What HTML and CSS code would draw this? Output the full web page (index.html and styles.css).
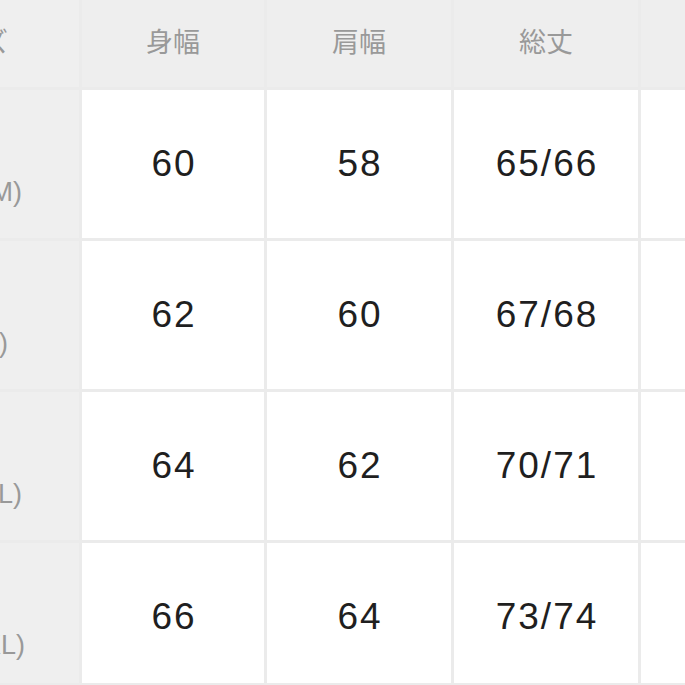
FILE: index.html
```html
<!DOCTYPE html>
<html lang="ja">
<head>
<meta charset="utf-8">
<title>サイズ表</title>
<link rel="stylesheet" href="styles.css">
</head>
<body>
<div class="size-table">
  <div class="cell head label"><span>サイズ</span></div>
  <div class="cell head">身幅</div>
  <div class="cell head">肩幅</div>
  <div class="cell head">総丈</div>
  <div class="cell head"></div>

  <div class="cell label"><span>S(M)</span></div>
  <div class="cell num">60</div>
  <div class="cell num">58</div>
  <div class="cell num">65/66</div>
  <div class="cell num"></div>

  <div class="cell label narrow"><span>(S)</span></div>
  <div class="cell num">62</div>
  <div class="cell num">60</div>
  <div class="cell num">67/68</div>
  <div class="cell num"></div>

  <div class="cell label"><span>(L)</span></div>
  <div class="cell num">64</div>
  <div class="cell num">62</div>
  <div class="cell num">70/71</div>
  <div class="cell num"></div>

  <div class="cell label last wide"><span>(XL)</span></div>
  <div class="cell num last">66</div>
  <div class="cell num last">64</div>
  <div class="cell num last">73/74</div>
  <div class="cell num last"></div>
</div>
</body>
</html>
```

FILE: styles.css
```css
html, body {
  margin: 0;
  padding: 0;
  background: #ffffff;
  overflow: hidden;
}

.size-table {
  display: grid;
  grid-template-columns: 79px 182px 184px 184px 1fr;
  grid-template-rows: 87px 148px 148px 148px 140px;
  gap: 3px;
  background: #ebebeb;
  width: 685px;
  padding-bottom: 3px;
}

.cell {
  display: flex;
  align-items: center;
  justify-content: center;
  background: #ffffff;
  overflow: hidden;
  white-space: nowrap;
}

.head {
  background: #eeeeee;
  color: #999999;
  font-family: "Noto Sans CJK JP", "Noto Sans", sans-serif;
  font-size: 27px;
  padding-bottom: 6px;
  box-sizing: border-box;
}

.label {
  background: #efefef;
  color: #999999;
  font-family: "Liberation Sans", "Noto Sans CJK JP", sans-serif;
  font-size: 27px;
  justify-content: flex-end;
  padding-right: 57px;
  padding-top: 56px;
  box-sizing: border-box;
}

.head.label {
  padding-top: 0;
  padding-right: 71px;
  font-family: "Noto Sans CJK JP", sans-serif;
  font-size: 27px;
}

.label.narrow {
  padding-right: 71px;
}

.label.wide {
  padding-right: 54px;
}

.num {
  color: #1f1f1f;
  font-family: "Liberation Sans", Arial, sans-serif;
  font-size: 37px;
  letter-spacing: 2px;
  padding-left: 2px;
  box-sizing: border-box;
}

.num.last {
  padding-top: 8px;
}

.label.last {
  padding-top: 64px;
}
```
